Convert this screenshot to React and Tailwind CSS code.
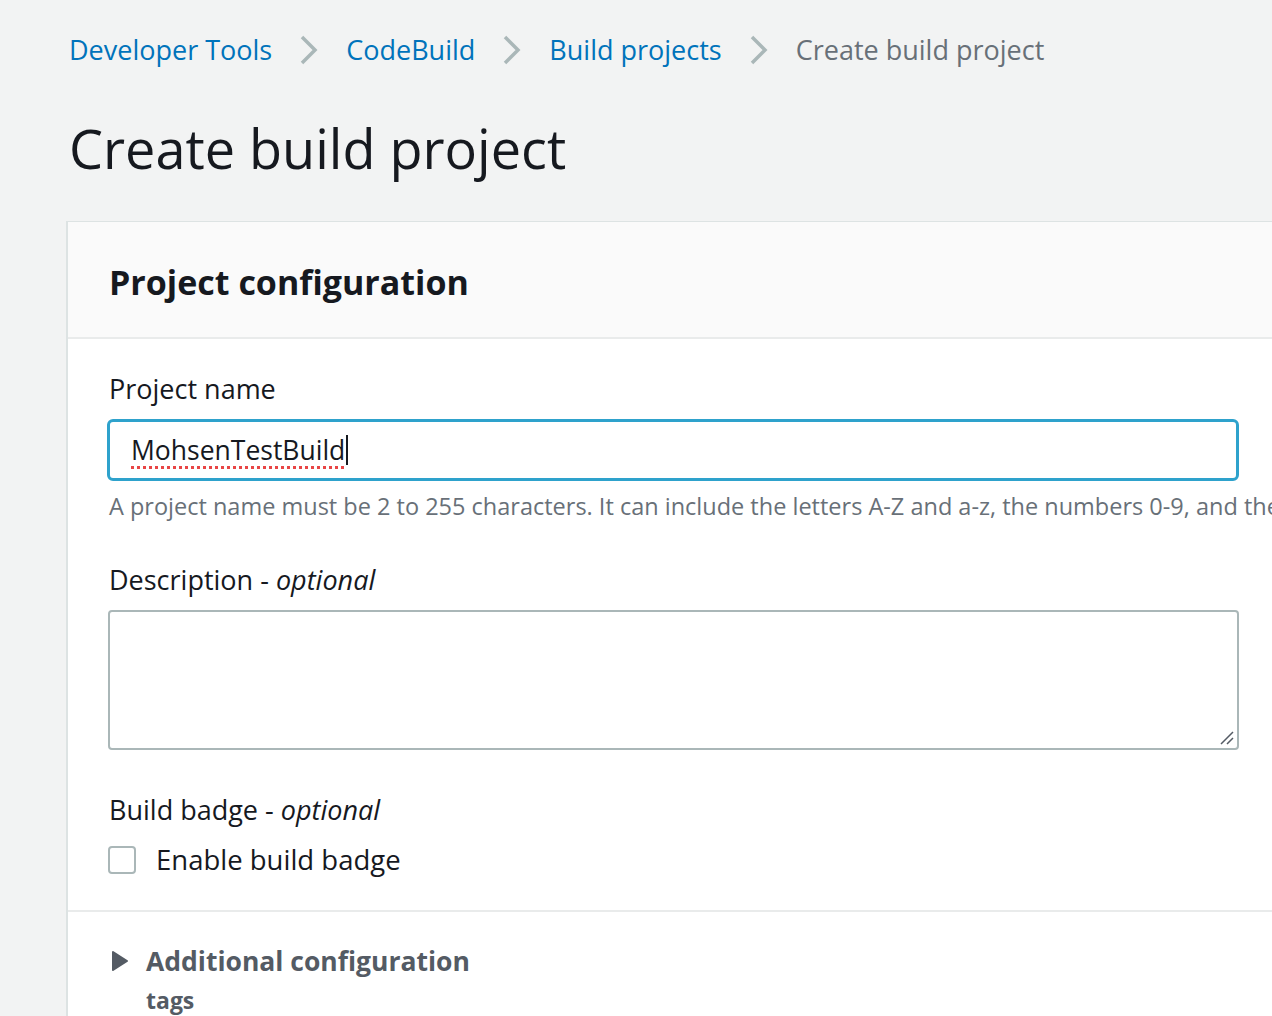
import React from "react";

function Chevron() {
  return (
    <svg width="22" height="32" viewBox="0 0 22 32" className="mx-[26px]">
      <path d="M4 3 L17 16 L4 29" fill="none" stroke="#aab7b8" strokeWidth="3.5" />
    </svg>
  );
}

export default function App() {
  return (
    <div
      className="h-[1016px] w-[1272px] overflow-hidden bg-[#f2f3f3] text-[#16191f]"
      style={{ fontFamily: '"Open Sans", "Noto Sans", sans-serif' }}
    >
      <div className="pl-[69px] pt-[27px]">
        <nav className="flex h-[46px] items-center text-[27px] leading-[46px]">
          <span className="text-[#0073bb]">Developer Tools</span>
          <Chevron />
          <span className="text-[#0073bb]">CodeBuild</span>
          <Chevron />
          <span className="text-[#0073bb]">Build projects</span>
          <Chevron />
          <span className="text-[#687078]">Create build project</span>
        </nav>
        <h1 className="mt-[43px] text-[54px] leading-[64px] font-normal">Create build project</h1>
      </div>

      <div className="ml-[66px] mt-[41px] w-[1240px] border-l-[2px] border-t border-[#dde3e3] bg-white pb-[60px]">
        <div className="flex h-[117px] items-center border-b-[2px] border-[#e9ebeb] bg-[#fafafa] pl-[41px]">
          <h2 className="pt-[4px] text-[34px] font-bold leading-[40px]">Project configuration</h2>
        </div>
        <div className="pl-[41px] pt-[32px]">
          <div className="text-[27px] leading-[36px]">Project name</div>
          <div className="-ml-[2px] mt-[12px] flex h-[62px] w-[1132px] items-center rounded-[6px] border-[3px] border-[#2ea2cc] pl-[21px]">
            <span className="text-[26.5px] leading-[32px] underline decoration-dotted decoration-[#e84545] decoration-[3px] underline-offset-[6px]">
              MohsenTestBuild
            </span>
            <span className="ml-[1px] h-[30px] w-[2px] bg-[#16191f]" />
          </div>
          <div className="mt-[8px] whitespace-nowrap text-[23.5px] leading-[34px] text-[#687078]">
            A project name must be 2 to 255 characters. It can include the letters A-Z and a-z, the numbers 0-9, and the special characters - and _.
          </div>

          <div className="mt-[39px] text-[27px] leading-[36px]">
            Description - <span className="italic">optional</span>
          </div>
          <div className="relative -ml-[1px] mt-[12px] h-[140px] w-[1131px] rounded-[4px] border-[2px] border-[#aab7b8] bg-white">
            <svg className="absolute bottom-[2px] right-[2px]" width="16" height="16" viewBox="0 0 16 16">
              <path d="M2 14 L14 2 M8 14 L14 8" stroke="#545b64" strokeWidth="1.5" />
            </svg>
          </div>

          <div className="mt-[42px] text-[27px] leading-[36px]">
            Build badge - <span className="italic">optional</span>
          </div>
          <div className="mt-[14px] flex items-center">
            <div className="-ml-[1px] h-[28px] w-[28px] rounded-[4px] border-[2px] border-[#aab7b8] bg-white" />
            <span className="ml-[20px] text-[27.5px] leading-[36px]">Enable build badge</span>
          </div>
        </div>
        <div className="mt-[32px] border-t-[2px] border-[#e9ebeb] pl-[41px] pt-[29px]">
          <div className="flex items-center">
            <svg width="20" height="22" viewBox="0 0 20 22" className="ml-[1px]">
              <path d="M3 2 L17 11 L3 20 Z" fill="#545b64" stroke="#545b64" strokeWidth="2" strokeLinejoin="round" />
            </svg>
            <span className="ml-[16px] text-[26.5px] font-bold leading-[40px] text-[#545b64]">Additional configuration</span>
          </div>
          <div className="ml-[37px] mt-[2px] text-[23px] font-bold leading-[34px] text-[#545b64]">tags</div>
        </div>
      </div>
    </div>
  );
}
